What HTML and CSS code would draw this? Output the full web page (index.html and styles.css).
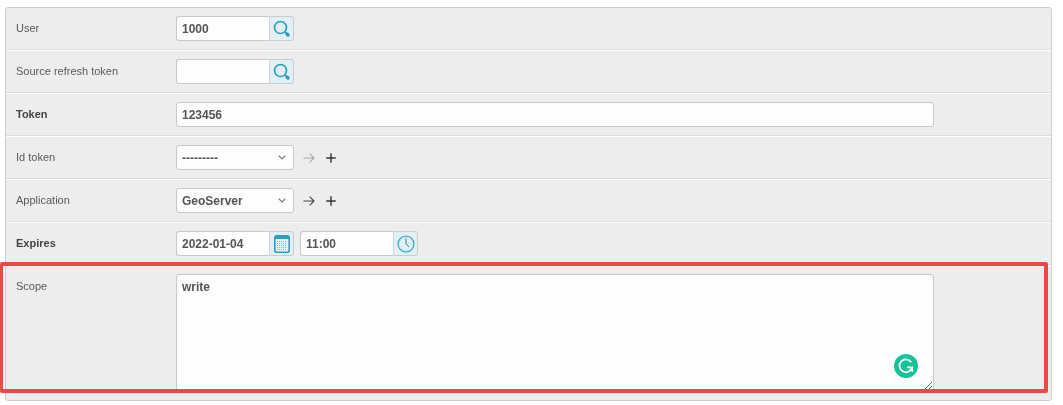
FILE: index.html
```html
<!DOCTYPE html>
<html lang="en">
<head>
    <meta charset="UTF-8">
    <meta name="viewport" content="width=device-width, initial-scale=1.0">
    <title>Change access token</title>
    <link rel="stylesheet" href="styles.css">
</head>
<body>
    <form class="panel">
        <div class="form-row">
            <label class="row-label">User</label>
            <div class="field-group">
                <input class="text-input short" type="text" value="1000">
                <a class="lookup-button">
                    <svg width="18" height="18" viewBox="0 0 18 18"><circle cx="7.5" cy="7.5" r="6" fill="none" stroke="#2e9dbd" stroke-width="1.7"/><path d="M11.8 11.8l1.6 1.6" stroke="#2e9dbd" stroke-width="1.5"/><path d="M14 14l1 1" stroke="#2e9dbd" stroke-width="3.4" stroke-linecap="round"/></svg>
                </a>
            </div>
        </div>
        <div class="form-row">
            <label class="row-label">Source refresh token</label>
            <div class="field-group">
                <input class="text-input short" type="text" value="">
                <a class="lookup-button">
                    <svg width="18" height="18" viewBox="0 0 18 18"><circle cx="7.5" cy="7.5" r="6" fill="none" stroke="#2e9dbd" stroke-width="1.7"/><path d="M11.8 11.8l1.6 1.6" stroke="#2e9dbd" stroke-width="1.5"/><path d="M14 14l1 1" stroke="#2e9dbd" stroke-width="3.4" stroke-linecap="round"/></svg>
                </a>
            </div>
        </div>
        <div class="form-row">
            <label class="row-label required">Token</label>
            <input class="text-input wide" type="text" value="123456">
        </div>
        <div class="form-row">
            <label class="row-label">Id token</label>
            <div class="select-wrap">
                <select class="select-input"><option>---------</option></select>
                <svg class="select-arrow" width="8" height="5" viewBox="0 0 8 5"><path d="M0.7 0.7L4 4l3.3-3.3" fill="none" stroke="#777" stroke-width="1.2"/></svg>
            </div>
            <div class="related-links">
                <svg width="12" height="10" viewBox="0 0 12 10"><path d="M0.5 5h10.5M6.7 0.7L11 5l-4.3 4.3" fill="none" stroke="#aaa" stroke-width="1.1"/></svg>
                <svg width="10" height="10" viewBox="0 0 10 10"><path d="M5 0.3v9.4M0.3 5h9.4" fill="none" stroke="#333" stroke-width="1.4"/></svg>
            </div>
        </div>
        <div class="form-row">
            <label class="row-label">Application</label>
            <div class="select-wrap">
                <select class="select-input"><option>GeoServer</option></select>
                <svg class="select-arrow" width="8" height="5" viewBox="0 0 8 5"><path d="M0.7 0.7L4 4l3.3-3.3" fill="none" stroke="#777" stroke-width="1.2"/></svg>
            </div>
            <div class="related-links">
                <svg width="12" height="10" viewBox="0 0 12 10"><path d="M0.5 5h10.5M6.7 0.7L11 5l-4.3 4.3" fill="none" stroke="#444" stroke-width="1.1"/></svg>
                <svg width="10" height="10" viewBox="0 0 10 10"><path d="M5 0.3v9.4M0.3 5h9.4" fill="none" stroke="#333" stroke-width="1.4"/></svg>
            </div>
        </div>
        <div class="form-row">
            <label class="row-label required">Expires</label>
            <div class="field-group">
                <input class="text-input short" type="text" value="2022-01-04">
                <a class="lookup-button">
                    <svg width="16" height="18" viewBox="0 0 16 18"><rect x="0.8" y="0.8" width="14.4" height="16.4" rx="2" fill="#e6f3f7" stroke="#2e9dbd" stroke-width="1.6"/><rect x="1" y="1" width="14" height="3" fill="#2e9dbd"/><path d="M3 6.5h10M3 8.5h10M3 10.5h10M3 12.5h10M3 14.5h10" stroke="#6db9d0" stroke-width="1" stroke-dasharray="1 1"/></svg>
                </a>
            </div>
            <div class="field-group">
                <input class="text-input short" type="text" value="11:00">
                <a class="lookup-button">
                    <svg width="18" height="18" viewBox="0 0 18 18"><circle cx="9" cy="9" r="8" fill="none" stroke="#2e9dbd" stroke-width="1.1"/><circle cx="9" cy="9" r="6.6" fill="none" stroke="#7fc3d8" stroke-width="0.8" stroke-dasharray="1 1.6"/><path d="M9 3.5V9l3 3" fill="none" stroke="#2e7f9c" stroke-width="1"/></svg>
                </a>
            </div>
        </div>
        <div class="form-row last-row">
            <label class="row-label">Scope</label>
            <textarea class="text-area">write</textarea>
        </div>
    </form>

    <!-- grammarly badge and the red highlight sit over the form -->
    <svg class="grammarly-badge" width="24" height="24" viewBox="0 0 24 24">
        <circle cx="12" cy="12" r="12" fill="#15c39a"/>
        <path d="M17.2 8.2A6.4 6.4 0 1 0 18 13.6M13.2 13.4h5v4.4" fill="none" stroke="#fff" stroke-width="1.7"/>
    </svg>
    <div class="highlight-box"></div>
</body>
</html>
```

FILE: styles.css
```css
body {
    font-family: "Liberation Sans", Arial, sans-serif;
    margin: 0;
    height: 405px;
    overflow: hidden;
    background-color: #ffffff;
    color: #555;
}
.panel {
    margin: 7px 11px 0 5px;
    border: 1px solid #ccc;
    border-radius: 3px;
    background-color: #ededed;
    height: 394px;
    box-sizing: border-box;
    overflow: hidden;
    will-change: opacity;
}
.form-row {
    display: flex;
    align-items: flex-start;
    gap: 6px;
    height: 43px;
    box-sizing: border-box;
    padding: 8px 0 8px 10px;
    border-top: 1px solid #fff;
    border-bottom: 1px solid #ddd;
}
.form-row:first-child {
    border-top: none;
    height: 42px;
}
.last-row {
    height: auto;
    border-bottom: none;
}
.row-label {
    width: 154px;
    margin-right: 0;
    flex-shrink: 0;
    font-size: 11px;
    line-height: 25px;
    color: #5a5a5a;
}
.last-row .row-label {
    line-height: 24px;
}
.required {
    font-weight: bold;
    color: #444;
}
.field-group {
    display: flex;
}
.text-input,
.select-input,
.text-area {
    font-family: "Liberation Sans", Arial, sans-serif;
    font-size: 12px;
    font-weight: bold;
    color: #555;
    box-sizing: border-box;
    border: 1px solid #c8c8c8;
    border-radius: 3px;
    background-color: #fdfdfd;
    outline: none;
}
.text-input {
    height: 25px;
    padding: 0 5px;
}
.short {
    width: 94px;
    border-radius: 3px 0 0 3px;
    border-right-color: #d5d5d5;
}
.wide {
    width: 758px;
}
.lookup-button {
    display: flex;
    align-items: center;
    justify-content: center;
    width: 24px;
    height: 25px;
    box-sizing: border-box;
    border: 1px solid #ccc;
    border-left: none;
    border-radius: 0 3px 3px 0;
    background-color: #e1f0f5;
}
.select-wrap {
    position: relative;
    width: 118px;
    height: 25px;
}
.select-input {
    appearance: none;
    width: 100%;
    height: 25px;
    padding: 0 5px;
}
.select-arrow {
    position: absolute;
    right: 8px;
    top: 10px;
    pointer-events: none;
}
.related-links {
    display: flex;
    align-items: center;
    gap: 11px;
    height: 25px;
    margin-left: 3px;
}
.text-area {
    display: block;
    width: 758px;
    height: 117px;
    padding: 5px;
    line-height: 14px;
    resize: both;
}
.grammarly-badge {
    position: absolute;
    left: 894px;
    top: 354px;
}
.highlight-box {
    position: absolute;
    left: 0;
    top: 262px;
    width: 1048px;
    height: 131px;
    box-sizing: border-box;
    border: 4px solid #e94a45;
    border-left-width: 3px;
    border-radius: 2px;
}
```
